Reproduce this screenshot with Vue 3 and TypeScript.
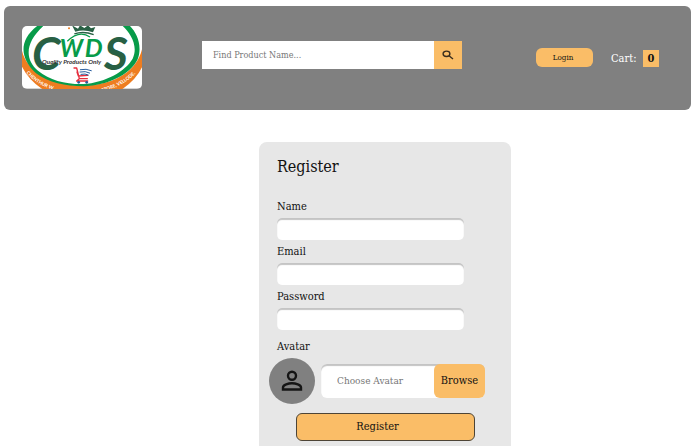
<script setup lang="ts">
import { ref } from 'vue'

interface Field {
  id: string
  label: string
  type: string
}

const fields: Field[] = [
  { id: 'name', label: 'Name', type: 'text' },
  { id: 'email', label: 'Email', type: 'email' },
  { id: 'password', label: 'Password', type: 'password' },
]

const values = ref<Record<string, string>>({ name: '', email: '', password: '' })
const query = ref('')
const avatar = ref('')
const cartCount = ref(0)
</script>

<template>
  <div class="page">
    <header class="header">
      <a class="logo" href="#">
        <svg viewBox="0 0 360 188" role="img" aria-label="CWDS">
          <defs>
            <path id="arc-left" d="M13 140 Q48 182 114 197" />
            <path id="arc-right" d="M240 197 Q310 180 352 130" />
          </defs>
          <rect width="360" height="188" fill="#fff" />
          <path d="M0 74 C14 134 84 178 184 179 C284 178 346 130 360 70 V124 Q342 162 300 190 H62 Q20 162 0 122Z" fill="#ee7d20" />
          <path d="M48 -2 C-14 44 -4 100 42 142 C80 170 130 181 184 181 C260 179 325 145 347 100 C362 60 345 20 322 -2 L300 -2 C325 20 350 60 332 98 C310 136 250 170 184 174 C130 175 84 163 48 134 C8 100 8 50 66 -2Z" fill="#079b49" />
          <path d="M150 -2 L160 17 Q186 9 213 19 L220 3 L207 7 L198 -2 L187 6 L174 -2 L168 8Z" fill="#286044" />
          <path d="M157 24 Q184 14 215 26" fill="none" stroke="#286044" stroke-width="4" />
          <circle cx="141" cy="7" r="3" fill="#ee7d20" />
          <path d="M136 46 Q171 11 204 33" fill="none" stroke="#079b49" stroke-width="4" />
          <text class="mark dark" x="30" y="133" font-size="138">C</text>
          <text class="mark light" x="113" y="93" font-size="72">W</text>
          <text class="mark light" x="188" y="93" font-size="76">D</text>
          <text class="mark dark" x="246" y="133" font-size="138">S</text>
          <text class="tagline" x="60" y="114" font-size="19">Quality Products Only</text>
          <g fill="none" stroke-linecap="round" stroke-linejoin="round">
            <path d="M156 126 H164 L172 158 H196 M165 138 L169 150 L197 148 M172 158 L164 165 H197" stroke="#e52e3d" stroke-width="4" />
            <path d="M175 131 Q193 127 208 134 M174 138 Q191 134 203 141 M177 145 Q190 142 199 147" stroke="#285d9e" stroke-width="3" />
          </g>
          <circle cx="170" cy="169" r="4" fill="#285d9e" />
          <circle cx="194" cy="169" r="4" fill="#285d9e" />
          <text class="ribbon"><textPath href="#arc-left">CHENTHUR W</textPath></text>
          <text class="ribbon"><textPath href="#arc-right">STORE, VELLODE.</textPath></text>
        </svg>
      </a>

      <form class="search" role="search" @submit.prevent>
        <input v-model="query" type="text" placeholder="Find Product Name..." aria-label="Find Product Name" />
        <button type="submit" aria-label="Search">
          <svg viewBox="0 0 12 10" aria-hidden="true">
            <ellipse cx="4.5" cy="3.8" rx="3.4" ry="2.7" />
            <path d="M7 5.8 L11 9" />
          </svg>
        </button>
      </form>

      <button class="login" type="button">Login</button>
      <div class="cart">
        <span>Cart:</span>
        <span class="count">{{ cartCount }}</span>
      </div>
    </header>

    <main class="main">
      <form class="card" @submit.prevent>
        <h1>Register</h1>
        <div v-for="field in fields" :key="field.id" class="field">
          <label :for="field.id">{{ field.label }}</label>
          <input :id="field.id" v-model="values[field.id]" :type="field.type" />
        </div>

        <label class="avatar-label" for="avatar">Avatar</label>
        <div class="avatar-row">
          <span class="portrait">
            <svg viewBox="0 0 22 22" aria-hidden="true">
              <circle cx="11" cy="5.8" r="4" />
              <path d="M2 19.5 V17.5 C2 14.8 7.5 13.2 11 13.2 S20 14.8 20 17.5 V19.5 Z" />
            </svg>
          </span>
          <div class="picker">
            <input id="avatar" v-model="avatar" type="text" placeholder="Choose Avatar" />
            <button type="button">Browse</button>
          </div>
        </div>

        <button class="submit" type="submit">Register</button>
      </form>
    </main>
  </div>
</template>

<style>
body {
  margin: 0;
  background: #fff;
}
</style>

<style scoped>
.page {
  font-family: "DejaVu Serif Condensed", "DejaVu Serif", serif;
  font-size: 11px;
  color: #111;
  padding: 6px 2px 0 4px;
}

.page * {
  box-sizing: border-box;
}

input,
button {
  font: inherit;
  color: inherit;
  border: 0;
  margin: 0;
  padding: 0;
}

input {
  min-width: 0;
  background: #fff;
  outline: 0;
}

input::placeholder {
  color: #777;
  opacity: 1;
}

button {
  background: #fabd67;
  cursor: pointer;
}

.header {
  display: flex;
  align-items: flex-start;
  padding: 20px 32px 21px 18px;
  background: #808080;
  border-radius: 6px;
}

.logo {
  flex: none;
  width: 120px;
  border-radius: 5px;
  overflow: hidden;
}

.logo svg {
  display: block;
  width: 100%;
}

.mark {
  font-family: Lato, sans-serif;
  font-style: italic;
  font-weight: 700;
}

.dark {
  fill: #286044;
}

.light {
  fill: #079b49;
}

.tagline {
  font-family: Lato, sans-serif;
  font-style: italic;
  font-weight: 700;
  fill: #333;
}

.ribbon {
  font-family: Lato, sans-serif;
  font-size: 14px;
  font-weight: 700;
  fill: #fff;
}

.search {
  display: flex;
  flex: 1;
  height: 28px;
  margin: 15px 74px 0 60px;
}

.search input {
  flex: 1;
  padding: 0 11px;
  font-size: 9px;
}

.search button {
  display: grid;
  place-items: center;
  width: 28px;
}

.search svg {
  width: 12px;
  height: 10px;
  fill: none;
  stroke: #3a2d1d;
  stroke-width: 1.4;
}

.login {
  flex: none;
  width: 57px;
  height: 19px;
  margin-top: 22px;
  padding-right: 3px;
  border-radius: 6px;
  font-size: 8px;
}

.cart {
  display: flex;
  flex: none;
  align-items: center;
  justify-content: space-between;
  width: 48px;
  margin: 24px 0 0 18px;
  color: #fff;
}

.count {
  width: 16px;
  line-height: 17px;
  background: #fabd67;
  color: #111;
  font-weight: 700;
  text-align: center;
}

.main {
  display: flex;
  justify-content: center;
  padding: 32px 0 0 75px;
}

.card {
  width: 252px;
  padding: 13px 18px 24px;
  background: #e7e7e7;
  border-radius: 8px;
}

h1 {
  margin: 0 0 16px;
  font-size: 16px;
  line-height: 24px;
  font-weight: 400;
}

label {
  display: block;
  line-height: 23px;
}

.field input {
  display: block;
  width: 187px;
  height: 22px;
  padding: 2px 8px 0;
  border-radius: 5px;
  box-shadow: inset 0 2px 1px #c4c4c4;
}

.avatar-label {
  margin-top: 5px;
}

.avatar-row {
  display: flex;
  align-items: center;
  gap: 6px;
  margin: 0 8px 0 -8px;
}

.portrait {
  display: grid;
  flex: none;
  place-items: center;
  width: 46px;
  height: 46px;
  border-radius: 50%;
  background: #808080;
}

.portrait svg {
  width: 22px;
  height: 22px;
  fill: none;
  stroke: #151515;
  stroke-width: 2.4;
}

.picker {
  display: flex;
  flex: 1;
  min-width: 0;
  height: 34px;
  background: #fff;
  border-radius: 6px;
  box-shadow: inset 0 2px 1px #c4c4c4;
}

.picker input {
  flex: 1;
  padding: 0 0 0 16px;
  background: transparent;
  font-size: 10px;
}

.picker button {
  flex: none;
  width: 51px;
  border-radius: 6px;
}

.submit {
  display: block;
  width: 179px;
  height: 28px;
  margin: 9px 0 0 19px;
  padding-right: 16px;
  border: 1px solid #4d4436;
  border-radius: 6px;
}
</style>
